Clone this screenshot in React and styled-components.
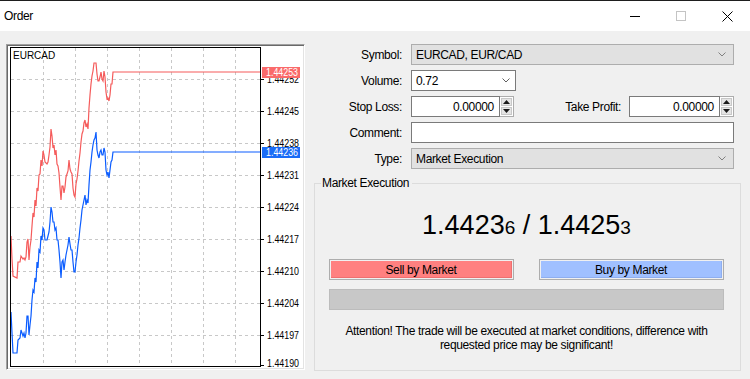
import React from 'react';
import styled, { createGlobalStyle } from 'styled-components';

const GlobalStyle = createGlobalStyle`
    html, body {
        margin: 0;
        padding: 0;
        background: #f0f0f0;
        font-family: 'Liberation Sans', Arial, sans-serif;
        font-size: 12px;
        letter-spacing: -0.35px;
        color: #000;
    }
`;

const Window = styled.div`
    width: 750px;
    height: 379px;
    display: flex;
    flex-direction: column;
    background: #f0f0f0;
    overflow: hidden;
`;

const TitleBar = styled.div`
    height: 30px;
    border-top: 1px solid #1e1e1e;
    background: #fff;
    display: flex;
    align-items: center;
    justify-content: space-between;
    padding-left: 4px;
`;

const Title = styled.span`
    font-size: 12px;
    margin-top: -1px;
`;

const Controls = styled.div`
    display: flex;
    height: 100%;
`;

const ControlButton = styled.div`
    width: 46px;
    height: 100%;
    display: flex;
    align-items: center;
    justify-content: center;
`;

const Body = styled.div`
    display: flex;
    gap: 9px;
    padding: 13px 0 0 6px;
`;

const ChartFrame = styled.div`
    width: 295px;
    height: 322px;
    border-top: 1px solid #a0a0a0;
    border-left: 1px solid #a0a0a0;
    border-right: 1px solid #fff;
    border-bottom: 1px solid #fff;
    box-shadow: inset 1px 1px 0 #696969, inset -1px -1px 0 #e3e3e3;
    padding: 1px;
    background: #fff;
    letter-spacing: 0;
    svg {
        display: block;
    }
`;

const Panel = styled.div`
    width: 427px;
    display: flex;
    flex-direction: column;
`;

const Form = styled.div`
    display: grid;
    grid-template-columns: 88px 323px;
    column-gap: 9px;
    row-gap: 5px;
    align-items: center;
`;

const Label = styled.label`
    text-align: right;
    white-space: nowrap;
`;

const Combo = styled.div`
    height: 21px;
    box-sizing: border-box;
    width: ${p => p.$width || '100%'};
    display: flex;
    align-items: center;
    justify-content: space-between;
    padding: 0 ${p => (p.$white ? 5 : 7)}px 0 4px;
    background: ${p => (p.$white ? '#fff' : '#e1e1e1')};
    border: 1px solid ${p => (p.$white ? '#7a7a7a' : '#adadad')};
`;

const Input = styled.div`
    height: 21px;
    box-sizing: border-box;
    width: ${p => p.$width || '100%'};
    background: #fff;
    border: 1px solid #7a7a7a;
    display: flex;
    align-items: center;
    justify-content: flex-end;
    padding-right: 5px;
`;

const SpinRow = styled.div`
    display: flex;
    align-items: center;
`;

const SpinWrap = styled.div`
    display: flex;
    width: ${p => p.$width};
`;

const Spinner = styled.div`
    width: 16px;
    height: 21px;
    box-sizing: border-box;
    border: 1px solid #adadad;
    border-left: none;
    background: #fff;
    display: flex;
    flex-direction: column;
    padding: 1px;
    gap: 1px;
`;

const SpinButton = styled.div`
    flex: 1;
    background: #e5e5e5;
    border: 1px solid #c8c8c8;
    display: flex;
    align-items: center;
    justify-content: center;
`;

const Spacer = styled.div`
    flex: 1;
`;

const InlineLabel = styled.span`
    margin-right: 8px;
`;

const Group = styled.fieldset`
    margin: 7px 0 0 0;
    padding: 0 16px 18px 14px;
    border: 1px solid #dcdcdc;
    min-width: 0;
`;

const Legend = styled.legend`
    margin-left: -8px;
    padding: 0 3px 0 1px;
    line-height: 14px;
    color: #000;
`;

const Price = styled.div`
    margin-top: 19px;
    height: 32px;
    line-height: 32px;
    text-align: center;
    font-size: 27px;
    letter-spacing: 0;
    color: #000;
`;

const Small = styled.span`
    font-size: 19px;
`;

const Buttons = styled.div`
    display: flex;
    justify-content: space-between;
    margin-top: 18px;
`;

const TradeButton = styled.div`
    width: 185px;
    height: 21px;
    box-sizing: border-box;
    border: 1px solid #adadad;
    padding: 1px;
    background: #f0f0f0;
    div {
        height: 100%;
        box-sizing: border-box;
        background: ${p => p.$color};
        border-right: 1px solid ${p => p.$edge};
        border-bottom: 1px solid ${p => p.$edge};
        display: flex;
        align-items: center;
        justify-content: center;
        line-height: 1;
        padding-top: 1px;
    }
`;

const Progress = styled.div`
    margin-top: 9px;
    height: 21px;
    box-sizing: border-box;
    background: #c8c8c8;
    border: 1px solid #bcbcbc;
`;

const Notice = styled.div`
    margin-top: 14px;
    text-align: center;
    line-height: 14px;
`;

const Chevron = ({ color = '#606060' }) => (
    <svg width="8" height="5" viewBox="0 0 8 5">
        <polyline points="0.5,0.5 4,4 7.5,0.5" fill="none" stroke={color} strokeWidth="1" />
    </svg>
);

const Arrow = ({ up }) => (
    <svg width="7" height="4" viewBox="0 0 7 4">
        <polygon points={up ? '3.5,0 7,4 0,4' : '0,0 7,0 3.5,4'} fill="#1a1a1a" />
    </svg>
);

const Spin = ({ value, width }) => (
    <SpinWrap $width={width}>
        <Input>{value}</Input>
        <Spinner>
            <SpinButton><Arrow up /></SpinButton>
            <SpinButton><Arrow /></SpinButton>
        </Spinner>
    </SpinWrap>
);

const bluePts = [
    [10, 322], [11, 312], [12, 333], [13, 353], [17, 353], [18, 340], [20, 338], [21, 330], [23, 336],
    [24, 333], [25, 338], [26, 333], [27, 316], [28, 316], [29, 335], [30, 325], [31, 316], [32, 300],
    [33, 290], [34, 292], [35, 278], [36, 282], [37, 262], [38, 268], [39, 250], [40, 252], [41, 236],
    [42, 240], [43, 228], [44, 230], [45, 240], [47, 240], [48, 236], [49, 232], [50, 222], [51, 207],
    [52, 212], [53, 222], [54, 222], [55, 230], [56, 228], [57, 240], [58, 240], [59, 250], [60, 262],
    [61, 278], [62, 262], [63, 260], [64, 270], [65, 262], [66, 255], [67, 250], [68, 245], [69, 237],
    [70, 244], [71, 250], [72, 250], [73, 262], [74, 272], [75, 272], [76, 262], [77, 255], [78, 245],
    [79, 238], [80, 228], [81, 220], [82, 210], [83, 205], [84, 200], [85, 195], [86, 205], [87, 200],
    [88, 203], [89, 185], [90, 170], [91, 162], [92, 152], [93, 145], [94, 140], [95, 138], [96, 132],
    [97, 150], [98, 155], [99, 158], [100, 152], [101, 150], [102, 155], [103, 155], [104, 148],
    [105, 152], [106, 170], [107, 175], [108, 172], [109, 178], [110, 170], [111, 162], [112, 160],
    [113, 152], [260, 152],
];

const redPts = bluePts.map(([x, y], i) => {
    if (x >= 113) return [x, 72];
    if (x === 96) return [x, 63];
    return [x, y - 76 + ((i * 7) % 5) - 2];
});

const toPoints = pts => pts.map(p => p.join(',')).join(' ');

const levels = ['1.44252', '1.44245', '1.44238', '1.44231', '1.44224', '1.44217', '1.44210', '1.44204', '1.44197'];
const vGrid = [43, 75, 107, 139, 171, 203, 235];

const AxisText = ({ y, fill = '#000', x = 267, children }) => (
    <text x={x} y={y} fontSize="10" fill={fill} textLength="32" lengthAdjust="spacingAndGlyphs"
        fontFamily="Liberation Sans, sans-serif">{children}</text>
);

const Chart = () => (
    <svg width="295" height="322" viewBox="8 46 295 322">
        <defs>
            <clipPath id="plot">
                <rect x="11" y="48" width="249" height="318" />
            </clipPath>
        </defs>
        {vGrid.map(x => (
            <line key={x} x1={x + 0.5} y1="48" x2={x + 0.5} y2="366" stroke="#c8c8c8" strokeDasharray="3 3" />
        ))}
        {levels.map((l, i) => (
            <line key={l} x1="11" y1={79 + i * 32 + 0.5} x2="260" y2={79 + i * 32 + 0.5} stroke="#c8c8c8" strokeDasharray="3 3" />
        ))}
        <g clipPath="url(#plot)" fill="none" strokeWidth="1.2" strokeLinejoin="miter">
            <polyline points={toPoints(redPts)} stroke="#f55b5b" />
            <polyline points={toPoints(bluePts)} stroke="#0a5cff" />
        </g>
        <rect x="10.5" y="47.5" width="250" height="319" fill="none" stroke="#000" />
        <text x="13" y="59" fontSize="10" fontFamily="Liberation Sans, sans-serif">EURCAD</text>
        {levels.map((l, i) => (
            <g key={l}>
                <line x1="261" y1={79 + i * 32 + 0.5} x2="264" y2={79 + i * 32 + 0.5} stroke="#000" />
                {i > 0 && <AxisText y={79 + i * 32 + 4}>{l}</AxisText>}
            </g>
        ))}
        <line x1="261" y1="365.5" x2="264" y2="365.5" stroke="#000" />
        <AxisText y={367}>1.44190</AxisText>
        <clipPath id="under-tag">
            <rect x="262" y="78" width="40" height="10" />
        </clipPath>
        <g clipPath="url(#under-tag)">
            <AxisText y={83}>1.44252</AxisText>
        </g>
        <rect x="262" y="67" width="38" height="11" fill="#fa6a6a" />
        <AxisText x={266} y={76} fill="#fff">1.44253</AxisText>
        <rect x="262" y="147" width="38" height="11" fill="#1a6cf7" />
        <AxisText x={266} y={156} fill="#fff">1.44236</AxisText>
    </svg>
);

const App = () => {
    return (
        <Window>
            <GlobalStyle />
            <TitleBar>
                <Title>Order</Title>
                <Controls>
                    <ControlButton>
                        <svg width="10" height="10" viewBox="0 0 10 10">
                            <line x1="0" y1="5.5" x2="10" y2="5.5" stroke="#000" />
                        </svg>
                    </ControlButton>
                    <ControlButton>
                        <svg width="10" height="10" viewBox="0 0 10 10">
                            <rect x="0.5" y="0.5" width="9" height="9" fill="none" stroke="#c4c4c4" />
                        </svg>
                    </ControlButton>
                    <ControlButton>
                        <svg width="11" height="11" viewBox="0 0 11 11">
                            <path d="M0.5 0.5 L10.5 10.5 M10.5 0.5 L0.5 10.5" stroke="#000" strokeWidth="1" />
                        </svg>
                    </ControlButton>
                </Controls>
            </TitleBar>
            <Body>
                <ChartFrame>
                    <Chart />
                </ChartFrame>
                <Panel>
                    <Form>
                        <Label>Symbol:</Label>
                        <Combo>EURCAD, EUR/CAD<Chevron color="#808080" /></Combo>

                        <Label>Volume:</Label>
                        <Combo $white $width="105px">0.72<Chevron /></Combo>

                        <Label>Stop Loss:</Label>
                        <SpinRow>
                            <Spin value="0.00000" width="103px" />
                            <Spacer />
                            <InlineLabel>Take Profit:</InlineLabel>
                            <Spin value="0.00000" width="105px" />
                        </SpinRow>

                        <Label>Comment:</Label>
                        <Input />

                        <Label>Type:</Label>
                        <Combo>Market Execution<Chevron color="#808080" /></Combo>
                    </Form>
                    <Group>
                        <Legend>Market Execution</Legend>
                        <Price>
                            1.4423<Small>6</Small> / 1.4425<Small>3</Small>
                        </Price>
                        <Buttons>
                            <TradeButton $color="#ff8080" $edge="#ef6f6f"><div>Sell by Market</div></TradeButton>
                            <TradeButton $color="#a0c0ff" $edge="#8eaef0"><div>Buy by Market</div></TradeButton>
                        </Buttons>
                        <Progress />
                        <Notice>
                            Attention! The trade will be executed at market conditions, difference with<br />
                            requested price may be significant!
                        </Notice>
                    </Group>
                </Panel>
            </Body>
        </Window>
    );
};

export default App;
